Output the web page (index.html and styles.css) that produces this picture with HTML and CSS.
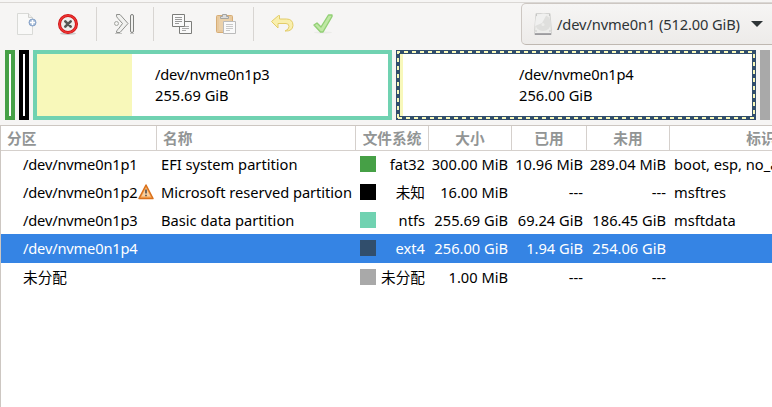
FILE: index.html
```html
<!DOCTYPE html>
<html lang="zh-CN">
<head>
<meta charset="utf-8">
<title>GParted</title>
<link rel="stylesheet" href="styles.css">
</head>
<body>
<div class="window">
  <header class="toolbar">
    <div class="group g-edit">
      <svg class="icon" width="24" height="24" viewBox="0 0 24 24">
        <path d="M3.500 1.500h11l4 4v17h-15z" fill="#f9f9f8" stroke="#d9dad7"/>
        <path d="M14.500 1.500v4h4" fill="#eee" stroke="#d0d1ce"/>
        <circle cx="18.500" cy="10.500" r="3.500" fill="#a3b9d6" stroke="#87a3c9"/>
        <path d="M16 10.500h5M18.500 8v5" stroke="#fff" stroke-width="1.500"/>
      </svg>
      <svg class="icon" width="24" height="24" viewBox="0 0 24 24">
        <ellipse cx="12" cy="21.500" rx="8" ry="1.500" fill="#ccc"/>
        <circle cx="12" cy="12" r="8.500" fill="#eeeeec" stroke="#cc1010" stroke-width="3"/>
        <circle cx="12" cy="12" r="8.500" fill="none" stroke="#ee3535" stroke-width="1.400"/>
        <path d="M9.300 9.300l5.400 5.400M14.700 9.300l-5.400 5.400" stroke="#555753" stroke-width="2.600" stroke-linecap="round"/>
      </svg>
    </div>
    <div class="group g-resize">
      <svg class="icon" width="24" height="24" viewBox="0 0 24 24">
        <path d="M4.500 2.500h3.500l8 9-8 9H4.500q-.5-2 1.500-3l4.500-6-4.500-5q-2-1.500-1.500-4z" fill="#f1f1ef" stroke="#90918e"/>
        <circle cx="4.500" cy="11.500" r="2" fill="#f4f4f2" stroke="#a5a6a2"/>
        <rect x="18.500" y="2.500" width="3" height="18" rx="1.500" fill="#f1f1ef" stroke="#80817e"/>
        <path d="M3 21.500h7M18 21.500h4" stroke="#c5c5c3"/>
      </svg>
    </div>
    <div class="group g-clip">
      <svg class="icon" width="24" height="24" viewBox="0 0 24 24">
        <path d="M9.500 9.500h12v12h-12z" fill="#fafafa" stroke="#7c7d7a"/>
        <path d="M12 14.500h7M12 16.500h7M12 18.500h4" stroke="#aaa"/>
        <path d="M2.500 2.500h12v12h-12z" fill="#fafafa" stroke="#7c7d7a"/>
        <path d="M5 5.500h7M5 7.500h7M5 9.500h7M5 11.500h4" stroke="#999"/>
      </svg>
      <svg class="icon" width="24" height="24" viewBox="0 0 24 24">
        <rect x="2.500" y="3.500" width="16" height="17" rx="1" fill="#e8c99d" stroke="#d7ad76"/>
        <path d="M5 5h11v13H5z" fill="#ebd1aa"/>
        <path d="M6.500 6.500v-2h2v-2h4v2h2v2z" fill="#ddd" stroke="#a4a5a2"/>
        <path d="M9.500 9.500h12v12h-12z" fill="#fafafa" stroke="#bbb"/>
        <path d="M12 12.500h7M12 14.500h7M12 16.500h7M12 18.500h4" stroke="#c8c8c8"/>
      </svg>
    </div>
    <div class="group g-undo">
      <svg class="icon" width="24" height="24" viewBox="0 0 24 24">
        <path d="M8.500 3.500L1.500 9.500l6.500 6.500v-4.500h8q3 0 3 3t-4 4.500q7.500.5 8-5.500 0-6.500-6.500-6.500H9.500v-3.500z" fill="#f9efad" stroke="#e3cc68" stroke-linejoin="round"/>
      </svg>
      <svg class="icon" width="24" height="24" viewBox="0 0 24 24">
        <ellipse cx="11" cy="20.500" rx="9" ry="1" fill="#ebebe9"/>
        <path d="M2 13l3-2 4 4L16.500 3h3.500v1.500L11 20H8.500z" fill="#bfe8a4" stroke="#92cf75" stroke-width="1.400" stroke-linejoin="round"/>
      </svg>
    </div>
    <div class="device">
      <svg class="disk" width="20" height="24" viewBox="0 0 20 24">
        <path d="M3 1.500h14l1.500 18v3h-17v-3z" fill="#ededeb" stroke="#d3d3d1"/>
        <circle cx="10" cy="11" r="8" fill="#dfdfdd"/>
        <path d="M3 5q5-5 11-3l-5 9-7 3z" fill="#f0f0ef"/>
        <circle cx="10" cy="12.500" r="1.500" fill="#ececea"/>
        <path d="M2 22h16" stroke="#77767c" stroke-width="1.200"/>
        <path d="M3 3h1M16 3h1M2.500 19h1M16.500 19h1" stroke="#aaa"/>
      </svg>
      <span>/dev/nvme0n1 (512.00 GiB)</span>
      <svg class="arrow" width="12" height="6" viewBox="0 0 12 6"><path d="M0 0h12L6 6z" fill="#2e3436"/></svg>
    </div>
  </header>

  <section class="map">
    <div class="part p1"></div>
    <div class="part p2"></div>
    <div class="part p3"><i class="used"></i><p><span class="path">/dev/nvme0n1p3</span><br>255.69 GiB</p></div>
    <div class="part p4"><i class="used"></i><p><span class="path">/dev/nvme0n1p4</span><br>256.00 GiB</p>
      <svg class="dash" width="360" height="70" viewBox="0 0 360 70"><path d="M2 68V2H358V68H2"/></svg>
    </div>
    <div class="part p5"></div>
  </section>

  <main class="list">
    <div class="row head"><b>分区</b><b>名称</b><b>文件系统</b><b>大小</b><b>已用</b><b>未用</b><b>标识</b></div>
    <div class="row first"><span class="path">/dev/nvme0n1p1</span><span>EFI system partition</span><span class="fs fat32">fat32</span><span>300.00 MiB</span><span>10.96 MiB</span><span>289.04 MiB</span><span>boot, esp, no_automount</span></div>
    <div class="row"><span class="path">/dev/nvme0n1p2<svg class="warn" width="16" height="16" viewBox="0 0 16 16"><path d="M8 1L15 14.500H1z" fill="#f6a552" stroke="#d9701b" stroke-width="1.500" stroke-linejoin="round"/><path d="M8 4L12.500 12.500h-9z" fill="#f9cf9f"/><path d="M8 5.500v4M8 10.800v1.500" stroke="#444" stroke-width="1.500"/></svg></span><span class="name">Microsoft reserved partition</span><span class="fs unknown">未知</span><span>16.00 MiB</span><span>---</span><span>---</span><span>msftres</span></div>
    <div class="row"><span class="path">/dev/nvme0n1p3</span><span>Basic data partition</span><span class="fs ntfs">ntfs</span><span>255.69 GiB</span><span>69.24 GiB</span><span>186.45 GiB</span><span>msftdata</span></div>
    <div class="row tall selected"><span class="path">/dev/nvme0n1p4</span><span></span><span class="fs ext4">ext4</span><span>256.00 GiB</span><span>1.94 GiB</span><span>254.06 GiB</span><span></span></div>
    <div class="row tall"><span>未分配</span><span></span><span class="fs free">未分配</span><span>1.00 MiB</span><span>---</span><span>---</span><span></span></div>
  </main>
</div>
</body>
</html>
```
FILE: styles.css
```css
* { box-sizing: border-box; }
body {
  margin: 0;
  overflow: hidden;
  background: #f6f5f4;
  color: #000;
  font: 14.667px/20px "Noto Sans", "Noto Sans CJK SC", sans-serif;
}
.window {
  width: 772px;
  height: 407px;
  padding-top: 2px;
  overflow: hidden;
  display: flex;
  flex-direction: column;
}
svg { display: block; flex: none; }

.toolbar {
  height: 48px;
  flex: none;
  border-top: 1px solid #dad7d4;
  display: flex;
  align-items: flex-start;
}
.group {
  height: 34px;
  flex: none;
  margin-top: 4px;
  display: flex;
  align-items: center;
  gap: 18px;
  border-right: 1px solid #d8d5d2;
}
.g-edit { width: 97px; padding-left: 14px; }
.g-resize { width: 57px; padding-left: 15px; }
.g-clip { width: 100px; padding-left: 16px; gap: 20px; }
.g-undo { width: 267px; padding-left: 16px; border-right: 0; }
.device {
  width: 262px;
  height: 42px;
  flex: none;
  padding-left: 11px;
  display: flex;
  align-items: center;
  border: 1px solid #cdc7c2;
  border-bottom-color: #bfb8b1;
  border-radius: 5px;
  background: linear-gradient(#f6f5f4, #edebe9);
  color: #2e3436;
  letter-spacing: -0.12px;
  white-space: nowrap;
}
.disk { margin-right: 4px; }
.arrow { margin-left: 11px; }

.map {
  height: 75px;
  flex: none;
  padding-left: 5px;
  display: flex;
  gap: 4px;
}
.part {
  height: 70px;
  flex: none;
  position: relative;
  display: flex;
  background: #fff;
  border: 4px solid;
}
.part p { margin: 10px 0 0; line-height: 21px; color: #000; }
.p1 { width: 10px; border-color: #46a046; }
.p2 { width: 10px; border-color: #000; }
.p3 { width: 359px; border-color: #70d2b1; }
.p4 { width: 360px; border-color: #314e6c; }
.p5 { width: 10px; background: #a9a9a9; border: 0; }
.path { letter-spacing: -0.18px; }
.name { letter-spacing: -0.04px; }
.used { background: #f8f8ba; }
.p3 .used { width: 95px; margin-right: 23px; }
.p4 .used { width: 3px; margin-right: 116px; }
.dash { position: absolute; left: -4px; top: -4px; }
.dash path { fill: none; stroke: #f8f8ba; stroke-width: 2; stroke-dasharray: 4 4; }

.list {
  flex: 1;
  background: #fff;
  border-top: 1px solid #cdc7c2;
  border-left: 1px solid #cdc7c2;
}
.row {
  width: max-content;
  height: 28px;
  display: grid;
  grid-template-columns: 156px 199px 73px 83px 75px 83px 183px;
}
.row > * {
  padding: 0 4px;
  display: flex;
  align-items: center;
  justify-content: flex-end;
  white-space: nowrap;
}
.row > :nth-child(1), .row > :nth-child(2), .row > :nth-child(7) { justify-content: flex-start; }
.row > span:first-child { padding-left: 22px; }
.head {
  height: 25px;
  border-bottom: 1px solid #d5d0cc;
  color: #929595;
}
.row.head > b { padding: 0 6px; border-right: 1px solid #d5d0cc; }
.row.head > b:nth-child(n+3) { justify-content: center; }
.first { height: 27px; padding-bottom: 1px; }
.tall { height: 29px; padding-bottom: 1px; }
.selected { background: #3584e4; color: #fff; }
.fs::before {
  content: "";
  width: 16px;
  height: 16px;
  margin-right: auto;
}
.fat32::before { background: #46a046; }
.unknown::before { background: #000; }
.ntfs::before { background: #70d2b1; }
.ext4::before { background: #314e6c; }
.free::before { background: #a9a9a9; }
```
